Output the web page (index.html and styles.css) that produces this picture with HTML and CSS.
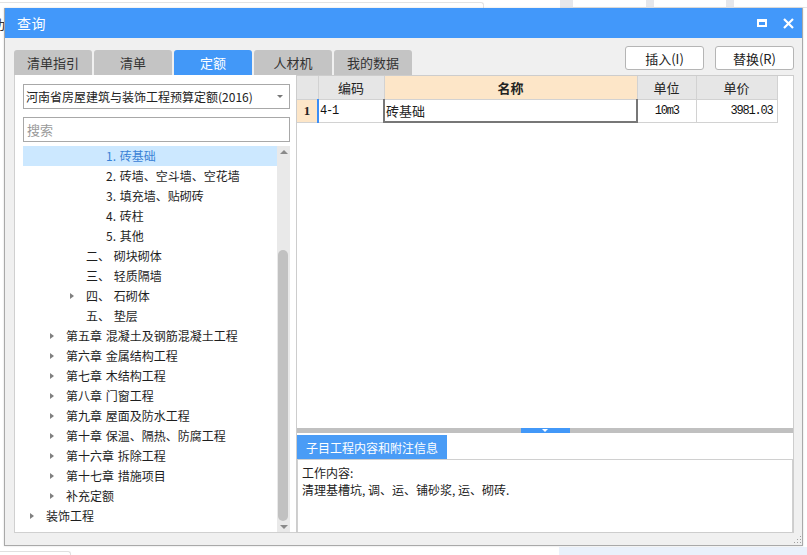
FILE: index.html
```html
<!DOCTYPE html>
<html lang="zh-CN">
<head>
<meta charset="utf-8">
<title>查询</title>
<link rel="stylesheet" href="styles.css">
</head>
<body>
<div class="desk">
  <div class="bg-topline"></div>
  <div class="bg-tabs"><span class="g"></span><span class="w"></span><span class="g"></span><span class="w"></span><span class="g"></span><span class="w"></span></div>
  <div class="bg-leftglyph">功</div>
  <div class="bg-bottom-left"></div>
  <div class="bg-bottom-right"></div>

  <div class="dialog">
    <div class="titlebar">
      <span class="title">查询</span>
      <div class="win-btns">
        <span class="max"></span>
        <svg class="close" width="11" height="11" viewBox="0 0 11 11"><path d="M1 1L10 10M10 1L1 10" stroke="#fff" stroke-width="2.2" fill="none"/></svg>
      </div>
    </div>
    <div class="dlg-body">
      <div class="toolbar">
        <div class="tabs">
          <span class="tab">清单指引</span>
          <span class="tab">清单</span>
          <span class="tab active">定额</span>
          <span class="tab">人材机</span>
          <span class="tab">我的数据</span>
        </div>
        <div class="actions">
          <button class="btn">插入(I)</button>
          <button class="btn">替换(R)</button>
        </div>
      </div>
      <div class="content">
        <div class="left">
          <div class="select">
            <span>河南省房屋建筑与装饰工程预算定额(2016)</span>
            <span class="caret"></span>
          </div>
          <div class="search">搜索</div>
          <div class="tree">
            <div class="tree-list">
              <div class="row lv3 sel"><span class="arr none"></span>1. 砖基础</div>
              <div class="row lv3"><span class="arr none"></span>2. 砖墙、空斗墙、空花墙</div>
              <div class="row lv3"><span class="arr none"></span>3. 填充墙、贴砌砖</div>
              <div class="row lv3"><span class="arr none"></span>4. 砖柱</div>
              <div class="row lv3"><span class="arr none"></span>5. 其他</div>
              <div class="row lv2"><span class="arr none"></span>二、 砌块砌体</div>
              <div class="row lv2"><span class="arr none"></span>三、 轻质隔墙</div>
              <div class="row lv2"><span class="arr"></span>四、 石砌体</div>
              <div class="row lv2"><span class="arr none"></span>五、 垫层</div>
              <div class="row lv1"><span class="arr"></span>第五章 混凝土及钢筋混凝土工程</div>
              <div class="row lv1"><span class="arr"></span>第六章 金属结构工程</div>
              <div class="row lv1"><span class="arr"></span>第七章 木结构工程</div>
              <div class="row lv1"><span class="arr"></span>第八章 门窗工程</div>
              <div class="row lv1"><span class="arr"></span>第九章 屋面及防水工程</div>
              <div class="row lv1"><span class="arr"></span>第十章 保温、隔热、防腐工程</div>
              <div class="row lv1"><span class="arr"></span>第十六章 拆除工程</div>
              <div class="row lv1"><span class="arr"></span>第十七章 措施项目</div>
              <div class="row lv1"><span class="arr"></span>补充定额</div>
              <div class="row lv0"><span class="arr"></span>装饰工程</div>
            </div>
            <div class="vscroll">
              <span class="up"></span>
              <div class="track"><span class="thumb"></span></div>
              <span class="down"></span>
            </div>
          </div>
        </div>
        <div class="right">
          <div class="upper">
            <table class="grid">
              <colgroup>
                <col class="c-no"><col class="c-code"><col class="c-name"><col class="c-unit"><col class="c-price">
              </colgroup>
              <thead>
                <tr><th></th><th>编码</th><th class="h-name">名称</th><th>单位</th><th>单价</th></tr>
              </thead>
              <tbody>
                <tr>
                  <td class="no">1</td>
                  <td class="code">4-1</td>
                  <td class="name">砖基础</td>
                  <td class="unit">10m3</td>
                  <td class="price">3981.03</td>
                </tr>
              </tbody>
            </table>
          </div>
          <div class="splitter"><span class="handle"><span class="tri"></span></span></div>
          <div class="info-tabs"><span class="info-tab">子目工程内容和附注信息</span></div>
          <div class="info-box">
            <div>工作内容:</div>
            <div>清理基槽坑, 调、运、铺砂浆, 运、砌砖.</div>
          </div>
        </div>
      </div>
      <div class="grip"></div>
    </div>
  </div>
</div>
</body>
</html>
```

FILE: styles.css
```css
* { box-sizing: border-box; }
html, body { margin: 0; padding: 0; }
body {
  width: 807px;
  height: 555px;
  overflow: hidden;
  background: #fff;
  font-family: "Noto Sans CJK SC", "Microsoft YaHei", sans-serif;
  font-size: 12px;
  color: #222;
}
.desk { position: relative; width: 807px; height: 555px; overflow: hidden; }

/* background desktop fragments */
.bg-topline {
  position: absolute; left: 0; top: 2px; width: 484px; height: 10px;
  border-top: 1px solid #e3e3e3; border-right: 1px solid #e3e3e3;
  border-top-right-radius: 3px;
}
.bg-tabs { position: absolute; left: 560px; top: 0; width: 247px; height: 8px; display: flex; }
.bg-tabs .g { width: 13px; background: #e6e7eb; }
.bg-tabs .g:nth-child(3), .bg-tabs .g:nth-child(5) { width: 8px; }
.bg-tabs .w { flex: 1; background: #fff; border-bottom: 1px solid #e4e4e4; }
.bg-leftglyph {
  position: absolute; left: -8px; top: 14px; font-size: 13px; color: #333;
}
.bg-bottom-left {
  position: absolute; left: 0; top: 551px; width: 71px; height: 10px;
  border-top: 1px solid #e0e0e0; border-right: 1px solid #e0e0e0; border-top-right-radius: 3px;
}
.bg-bottom-right { position: absolute; left: 559px; top: 547px; width: 248px; height: 8px; background: #eaf1fb; }

/* dialog window */
.dialog {
  position: absolute; left: 4px; top: 8px; width: 799px; height: 538px;
  border: 1px solid #a9a9a9; border-top: 0;
  background: #f0f0f0;
  display: flex; flex-direction: column;
  box-shadow: 0 0 2px rgba(0,0,0,0.15);
}
.titlebar {
  height: 30px; flex: none;
  background: #4298fa;
  display: flex; align-items: center; justify-content: space-between;
  padding: 0 8px 0 12px;
  color: #fff;
}
.title { font-size: 14px; letter-spacing: 0.5px; }
.win-btns { display: flex; align-items: center; gap: 16px; }
.max {
  width: 10px; height: 8px;
  border: 2px solid #fff; border-top-width: 3px;
}
.close { display: block; }

.dlg-body {
  flex: 1;
  display: flex; flex-direction: column;
  padding: 0 8px 12px 9px;
  position: relative;
}
.toolbar { height: 37px; flex: none; display: flex; justify-content: space-between; }
.tabs { display: flex; gap: 2px; align-self: flex-end; }
.tab {
  width: 78px; height: 25px;
  background: #c4c4c4; color: #333;
  border-radius: 3px 3px 0 0;
  font-size: 13px;
  display: flex; align-items: center; justify-content: center;
}
.tab.active { background: #4298f8; color: #fff; }
.actions { display: flex; gap: 11px; padding-top: 8px; }
.btn {
  width: 79px; height: 24px;
  background: #fff; border: 1px solid #b5b5b5; border-radius: 3px;
  font-family: inherit; font-size: 13px; color: #222;
  padding: 0;
}

.content { flex: 1; display: flex; }
.left {
  width: 282px; flex: none;
  background: #fff;
  border-left: 1px solid #d0d0d0; border-bottom: 1px solid #d0d0d0;
  padding: 9px 6px 0 8px;
  display: flex; flex-direction: column;
}
.select {
  height: 25px; flex: none;
  border: 1px solid #a8a8a8;
  display: flex; align-items: center; justify-content: space-between;
  padding: 0 6px 0 2px;
  font-size: 12px; color: #222;
}
.caret {
  width: 0; height: 0;
  border-left: 3px solid transparent; border-right: 3px solid transparent;
  border-top: 3px solid #777;
}
.search {
  height: 25px; flex: none; margin-top: 8px;
  border: 1px solid #a8a8a8;
  display: flex; align-items: center;
  padding-left: 3px;
  font-size: 13px; color: #9a9a9a;
}
.tree { flex: 1; margin-top: 4px; display: flex; overflow: hidden; }
.tree-list { flex: 1; overflow: hidden; }
.row {
  height: 20px; line-height: 20px;
  display: flex; align-items: center;
  white-space: nowrap;
  font-size: 12px; color: #1e1e1e;
  word-spacing: 1px;
}
.row.sel { background: #cce8ff; color: #3b82d6; }
.lv0 { padding-left: 7px; }
.lv1 { padding-left: 27px; }
.lv2 { padding-left: 47px; }
.lv3 { padding-left: 67px; }
.arr {
  width: 16px; height: 7px; flex: none;
  position: relative;
}
.arr::before {
  content: ""; position: absolute; left: 0; top: 0;
  border-left: 4px solid #808080;
  border-top: 3.5px solid transparent; border-bottom: 3.5px solid transparent;
}
.arr.none::before { display: none; }

.vscroll {
  width: 13px; flex: none;
  background: #e9e9e9;
  display: flex; flex-direction: column; align-items: center;
}
.up, .down { height: 11px; flex: none; display: flex; align-items: center; justify-content: center; width: 13px; }
.up::before {
  content: ""; border-left: 4px solid transparent; border-right: 4px solid transparent;
  border-bottom: 4px solid #8a8a8a;
}
.down::before {
  content: ""; border-left: 4px solid transparent; border-right: 4px solid transparent;
  border-top: 4px solid #8a8a8a;
}
.track { flex: 1; width: 13px; padding: 93px 2px 0 1px; }
.thumb { display: block; width: 10px; height: 271px; background: #c1c1c1; border-radius: 5px; }

.right {
  flex: 1;
  background: #fff;
  border: 1px solid #cdcdcd;
  display: flex; flex-direction: column;
}
.upper { flex: 1; padding-top: 0; }
.grid {
  border-collapse: collapse; table-layout: fixed; width: 480px;
  font-size: 13px;
}
.c-no { width: 21px; }
.c-code { width: 66px; }
.c-name { width: 253px; }
.c-unit { width: 59px; }
.c-price { width: 81px; }
.grid th {
  height: 23px; padding: 0;
  background: #e6e6e6;
  border: 1px solid #d2d2d2; border-top: 0;
  font-weight: normal; color: #222;
  text-align: center;
}
.grid th:first-child { border-left: 0; }
.grid th.h-name { background: #fde6c8; font-weight: bold; }
.grid td {
  height: 23px; padding: 0;
  border: 1px solid #d2d2d2;
  white-space: nowrap; overflow: hidden;
}
.grid td.no {
  border-left: 0;
  background: #fde6c8;
  font-family: "Liberation Serif", serif; font-weight: bold; font-size: 13px;
  text-align: center;
}
.mono, .grid td.code, .grid td.unit, .grid td.price {
  font-family: "Liberation Mono", monospace; font-size: 12px; letter-spacing: -1.2px;
  color: #111;
}
.grid td.code {
  border-left: 2px solid #3d8ef5;
  padding-left: 1px;
}
.grid td.name {
  border: 2px solid #777;
  border-top: 1px solid #4a90e8;
  padding-left: 1px;
  font-size: 13px;
}
.grid td.unit { text-align: center; }
.grid td.price { text-align: right; padding-right: 4px; }

.splitter {
  height: 5px; flex: none; background: #c0c0c0;
  display: flex; justify-content: center;
}
.handle {
  width: 49px; height: 5px; background: #4298f8;
  display: flex; justify-content: center; padding-top: 1px;
}
.tri {
  width: 0; height: 0;
  border-left: 3px solid transparent; border-right: 3px solid transparent;
  border-top: 3px solid #fff;
}
.info-tabs { height: 26px; flex: none; display: flex; align-items: flex-end; }
.info-tab {
  width: 150px; height: 24px;
  background: #4a9cf6; color: #fff;
  font-size: 12px;
  display: flex; align-items: center; justify-content: center;
}
.info-box {
  height: 73px; flex: none;
  border: 1px solid #d0d0d0; border-bottom: 0;
  padding: 4px 4px;
  font-size: 12px; line-height: 17px; color: #222;
}
.grip {
  position: absolute; right: 1px; bottom: 2px; width: 8px; height: 8px;
  background:
    radial-gradient(circle, #a0a0a0 0.9px, transparent 1px) 0 0 / 3px 3px;
  clip-path: polygon(100% 0, 100% 100%, 0 100%);
}
```
